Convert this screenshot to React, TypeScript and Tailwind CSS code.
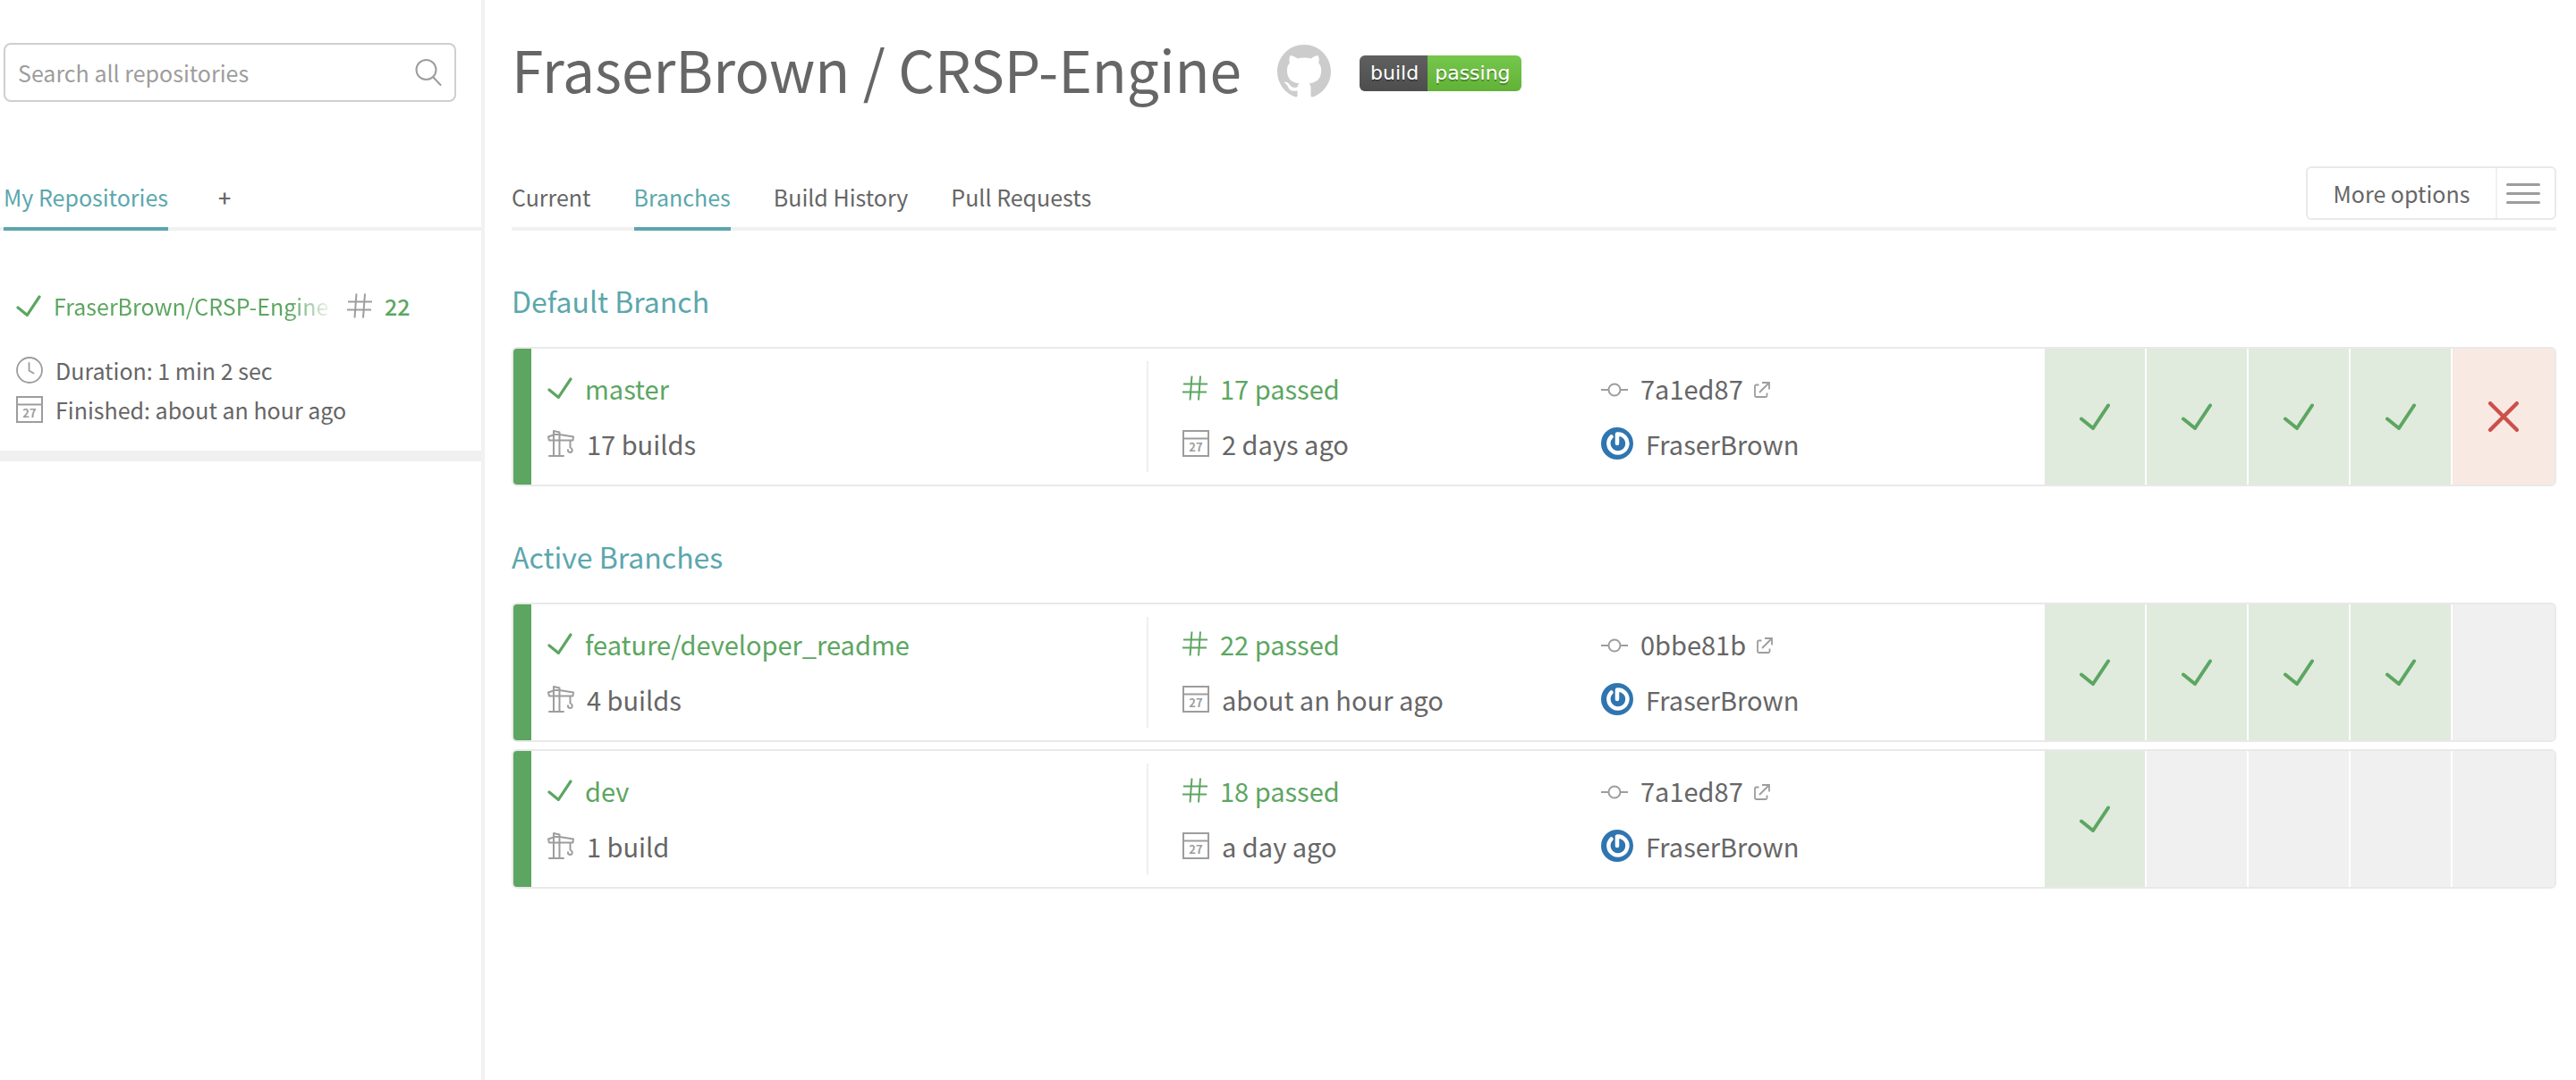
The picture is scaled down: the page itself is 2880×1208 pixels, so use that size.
import type { ReactNode } from "react";

type IconProps = { className?: string };

function Tick({ className }: IconProps) {
  return (
    <svg viewBox="0 0 34 30" fill="none" stroke="currentColor" strokeWidth="4" strokeLinecap="round" strokeLinejoin="round" className={className} aria-hidden="true">
      <path d="M2 17.5 15 28 32 2.5" />
    </svg>
  );
}

function Cross({ className }: IconProps) {
  return (
    <svg viewBox="0 0 34 34" fill="none" stroke="currentColor" strokeWidth="4.4" strokeLinecap="round" className={className} aria-hidden="true">
      <path d="M2.2 2.2 31.8 31.8M31.8 2.2 2.2 31.8" />
    </svg>
  );
}

function Hash({ className }: IconProps) {
  return (
    <svg viewBox="0 0 28 28" fill="none" stroke="currentColor" strokeWidth="2" className={className} aria-hidden="true">
      <path d="M1 9.5H28M0 18.5H27M10.5.5 8.5 27.5M20 .5 18 27.5" />
    </svg>
  );
}

function Calendar({ className }: IconProps) {
  return (
    <svg viewBox="0 0 30 30" fill="none" stroke="currentColor" strokeWidth="2" className={className} aria-hidden="true">
      <path d="M1 1H29V29H1ZM1 9.5H29" />
      <text x="15" y="24" textAnchor="middle" stroke="none" fill="currentColor" fontSize="13" fontWeight="700">27</text>
    </svg>
  );
}

function Clock({ className }: IconProps) {
  return (
    <svg viewBox="0 0 30 30" fill="none" stroke="currentColor" strokeWidth="1.8" strokeLinecap="round" className={className} aria-hidden="true">
      <circle cx="15" cy="15" r="14" />
      <path d="M14.5 7V15.5L19.5 18.5" />
    </svg>
  );
}

function Magnifier({ className }: IconProps) {
  return (
    <svg viewBox="0 0 30 30" fill="none" stroke="currentColor" strokeWidth="2" strokeLinecap="round" className={className} aria-hidden="true">
      <circle cx="12.5" cy="12" r="11" />
      <path d="M20.5 20.5 28.5 29" />
    </svg>
  );
}

function Crane({ className }: IconProps) {
  return (
    <svg viewBox="0 0 30 30" fill="none" stroke="currentColor" strokeWidth="2" strokeLinecap="round" strokeLinejoin="round" className={className} aria-hidden="true">
      <path d="M7 29V1L13.5 2.5V29M2 29H18M7 5.5 1 7.5 2 11.5H28.5L29 7.5 13.5 5H7M25.5 12V19.5C29 21.5 28 25 25.5 25 23.8 25 22.8 24 23 22.3" />
    </svg>
  );
}

function Commit({ className }: IconProps) {
  return (
    <svg viewBox="0 0 30 30" fill="none" stroke="currentColor" strokeWidth="2" className={className} aria-hidden="true">
      <circle cx="15" cy="15" r="6.5" />
      <path d="M0 15H8.5M21.5 15H30" />
    </svg>
  );
}

function External({ className }: IconProps) {
  return (
    <svg viewBox="0 0 18 18" fill="none" stroke="currentColor" strokeWidth="1.8" className={className} aria-hidden="true">
      <path d="M5.5 3.5H2.5Q1 3.5 1 5V15.5Q1 17 2.5 17H13Q14.5 17 14.5 15.5V12.5M9 1H17V8.5M17 1 6 12" />
    </svg>
  );
}

function Octocat({ className }: IconProps) {
  return (
    <svg viewBox="0 0 16 16" fill="currentColor" className={className} aria-hidden="true">
      <path d="M8 0C3.58 0 0 3.58 0 8c0 3.54 2.29 6.53 5.47 7.59.4.07.55-.17.55-.38 0-.19-.01-.82-.01-1.49-2.01.37-2.53-.49-2.69-.94-.09-.23-.48-.94-.82-1.13-.28-.15-.68-.52-.01-.53.63-.01 1.08.58 1.23.82.72 1.21 1.87.87 2.33.66.07-.52.28-.87.51-1.07-1.78-.2-3.64-.89-3.64-3.95 0-.87.31-1.59.82-2.15-.08-.2-.36-1.02.08-2.12 0 0 .67-.21 2.2.82.64-.18 1.32-.27 2-.27s1.36.09 2 .27c1.53-1.04 2.2-.82 2.2-.82.44 1.1.16 1.92.08 2.12.51.56.82 1.27.82 2.15 0 3.07-1.87 3.75-3.65 3.95.29.25.54.73.54 1.48 0 1.07-.01 1.93-.01 2.2 0 .21.15.46.55.38A8.01 8.01 0 0 0 16 8c0-4.42-3.58-8-8-8" />
    </svg>
  );
}

function Avatar({ className }: IconProps) {
  return (
    <svg viewBox="0 0 36 36" fill="none" className={className} aria-hidden="true">
      <circle cx="18" cy="18" r="18" fill="#2f75b1" />
      <path d="M11.5 10.5A10.5 10.5 0 1 0 18 7.5V18" stroke="#fff" strokeWidth="4.5" strokeLinecap="round" strokeLinejoin="round" />
    </svg>
  );
}

type Branch = {
  name: string;
  builds: string;
  number: string;
  finished: string;
  sha: string;
  history: ("pass" | "fail" | "none")[];
};

const defaultBranch: Branch[] = [
  { name: "master", builds: "17 builds", number: "17 passed", finished: "2 days ago", sha: "7a1ed87", history: ["pass", "pass", "pass", "pass", "fail"] },
];

const activeBranches: Branch[] = [
  { name: "feature/developer_readme", builds: "4 builds", number: "22 passed", finished: "about an hour ago", sha: "0bbe81b", history: ["pass", "pass", "pass", "pass", "none"] },
  { name: "dev", builds: "1 build", number: "18 passed", finished: "a day ago", sha: "7a1ed87", history: ["pass", "none", "none", "none", "none"] },
];

function Line({ icon, children }: { icon: ReactNode; children: ReactNode }) {
  return (
    <div className="flex h-10 items-center gap-3.5 whitespace-nowrap">
      {icon}
      {children}
    </div>
  );
}

function BranchCard({ branch }: { branch: Branch }) {
  return (
    <li className="flex h-[156px] overflow-hidden rounded-md border-2 border-[#e9e9e9] bg-white text-[29px] leading-10">
      <div className="w-5 shrink-0 bg-[#5ca661]" />
      <div className="grid min-w-0 flex-1 grid-cols-[690fr_506fr_496fr_570fr]">
        <div className="my-3.5 flex flex-col gap-[22px] border-r-2 border-[#efefef] pt-2.5 pl-[18px]">
          <Line icon={<Tick className="h-6 w-7 text-[#5ca661]" />}>
            <a href="#branch" className="text-[#5ca661]">{branch.name}</a>
          </Line>
          <Line icon={<Crane className="size-[30px] text-[#9d9d9d]" />}>
            <a href="#builds">{branch.builds}</a>
          </Line>
        </div>
        <div className="flex flex-col gap-[22px] pt-6 pl-[38px]">
          <Line icon={<Hash className="size-7 text-[#5ca661]" />}>
            <a href="#build" className="text-[#5ca661]">{branch.number}</a>
          </Line>
          <Line icon={<Calendar className="size-[30px] text-[#9d9d9d]" />}>
            <span>{branch.finished}</span>
          </Line>
        </div>
        <div className="flex flex-col gap-[22px] pt-6">
          <Line icon={<Commit className="mt-1 size-[30px] text-[#9d9d9d]" />}>
            <a href="#commit" className="flex items-center gap-3">
              {branch.sha}
              <External className="mt-1 size-[18px] text-[#9d9d9d]" />
            </a>
          </Line>
          <Line icon={<Avatar className="size-9" />}>
            <span>FraserBrown</span>
          </Line>
        </div>
        <ul className="grid grid-cols-5" aria-label="Recent builds">
          {branch.history.map((state, i) => (
            <li
              key={i}
              className={
                "flex items-center justify-center border-r-2 border-white last:border-r-0 " +
                (state === "pass" ? "bg-[#e0eadd] text-[#5ca661]" : state === "fail" ? "bg-[#f8e9e2] text-[#cd4f4a]" : "bg-[#f0f0f0]")
              }
            >
              {state === "pass" && <Tick className="h-[30px] w-[34px]" />}
              {state === "fail" && <Cross className="size-[34px]" />}
            </li>
          ))}
        </ul>
      </div>
    </li>
  );
}

function BranchSection({ title, branches }: { title: string; branches: Branch[] }) {
  return (
    <section>
      <h2 className="text-[32px] leading-10 text-[#5ba7ad]">{title}</h2>
      <ul className="mt-8 flex flex-col gap-2">
        {branches.map((b) => (
          <BranchCard key={b.name} branch={b} />
        ))}
      </ul>
    </section>
  );
}

const tabs = ["Current", "Branches", "Build History", "Pull Requests"];

export default function App() {
  return (
    <div className="flex min-h-screen bg-white font-['Noto_Sans_CJK_SC',sans-serif] text-[#666666]">
      <aside className="w-[542px] shrink-0 border-r-4 border-[#f1f1f1] pt-12 text-[25px] leading-9">
        <label className="mr-7 ml-1 flex h-[66px] items-center rounded-lg border-2 border-[#cfcfcf] px-3.5">
          <input type="search" aria-label="Search all repositories" placeholder="Search all repositories" className="min-w-0 flex-1 outline-none placeholder:text-[#9d9d9d]" />
          <Magnifier className="size-[30px] text-[#9d9d9d]" />
        </label>
        <nav className="mt-22 flex h-14 gap-14 border-b-4 border-[#f1f1f1] pl-1">
          <a href="#repositories" className="h-14 border-b-4 border-[#5ba7ad] text-[#5ba7ad]">My Repositories</a>
          <button type="button" aria-label="Add repository" className="h-9 font-medium">+</button>
        </nav>
        <article className="border-b-12 border-[#f0f0f0] px-[18px] pt-[66px] pb-7">
          <div className="flex h-9 items-center gap-3.5 text-[#5ca661]">
            <Tick className="h-6 w-7 shrink-0" />
            <a href="#repository" className="w-[314px] overflow-hidden whitespace-nowrap [mask-image:linear-gradient(to_right,black_84%,transparent)]">FraserBrown/CRSP-Engine</a>
            <Hash className="size-7 shrink-0 text-[#9d9d9d]" />
            <a href="#build" className="font-medium">22</a>
          </div>
          <div className="mt-9 flex flex-col gap-2">
            <p className="flex items-center gap-3.5"><Clock className="size-[30px] text-[#9d9d9d]" />Duration: 1 min 2 sec</p>
            <p className="flex items-center gap-3.5"><Calendar className="size-[30px] text-[#9d9d9d]" />Finished: about an hour ago</p>
          </div>
        </article>
      </aside>
      <main className="min-w-0 flex-1 pt-9 pr-[22px] pl-[30px]">
        <header className="flex h-[88px] items-center">
          <h1 className="pb-2 text-[64px] leading-[80px]">FraserBrown / CRSP-Engine</h1>
          <a href="#github" aria-label="View on GitHub" className="ml-10 text-[#cccccc]"><Octocat className="size-[60px]" /></a>
          <button type="button" className="mt-1 ml-8 flex h-10 overflow-hidden rounded-md font-['DejaVu_Sans',sans-serif] text-[22px] leading-10 text-white [text-shadow:0_2px_0_rgb(1_1_1/0.3)]">
            <span className="bg-linear-to-b from-[#606060] to-[#4d4d4d] pr-2.5 pl-3">build</span>
            <span className="bg-linear-to-b from-[#75c84c] to-[#62b138] pr-3 pl-2">passing</span>
          </button>
        </header>
        <div className="mt-[62px] flex h-[72px] items-start justify-between border-b-4 border-[#f1f1f1]">
          <nav className="mt-4 flex gap-12 text-[25px] leading-9">
            {tabs.map((t) => (
              <a key={t} href="#tab" className={t === "Branches" ? "h-14 border-b-4 border-[#5ba7ad] text-[#5ba7ad]" : "h-14"}>{t}</a>
            ))}
          </nav>
          <button type="button" className="flex h-[60px] items-center rounded-md border-2 border-[#e9e9e9] text-[25px] leading-9">
            <span className="w-[210px] text-center">More options</span>
            <span className="flex h-full w-[66px] flex-col justify-center gap-[7px] border-l-2 border-[#f1f1f1] pr-4 pl-2.5">
              <span className="h-[3px] rounded-full bg-[#9d9d9d]" />
              <span className="h-[3px] rounded-full bg-[#9d9d9d]" />
              <span className="h-[3px] rounded-full bg-[#9d9d9d]" />
            </span>
          </button>
        </div>
        <div className="mt-[58px] flex flex-col gap-[58px]">
          <BranchSection title="Default Branch" branches={defaultBranch} />
          <BranchSection title="Active Branches" branches={activeBranches} />
        </div>
      </main>
    </div>
  );
}
